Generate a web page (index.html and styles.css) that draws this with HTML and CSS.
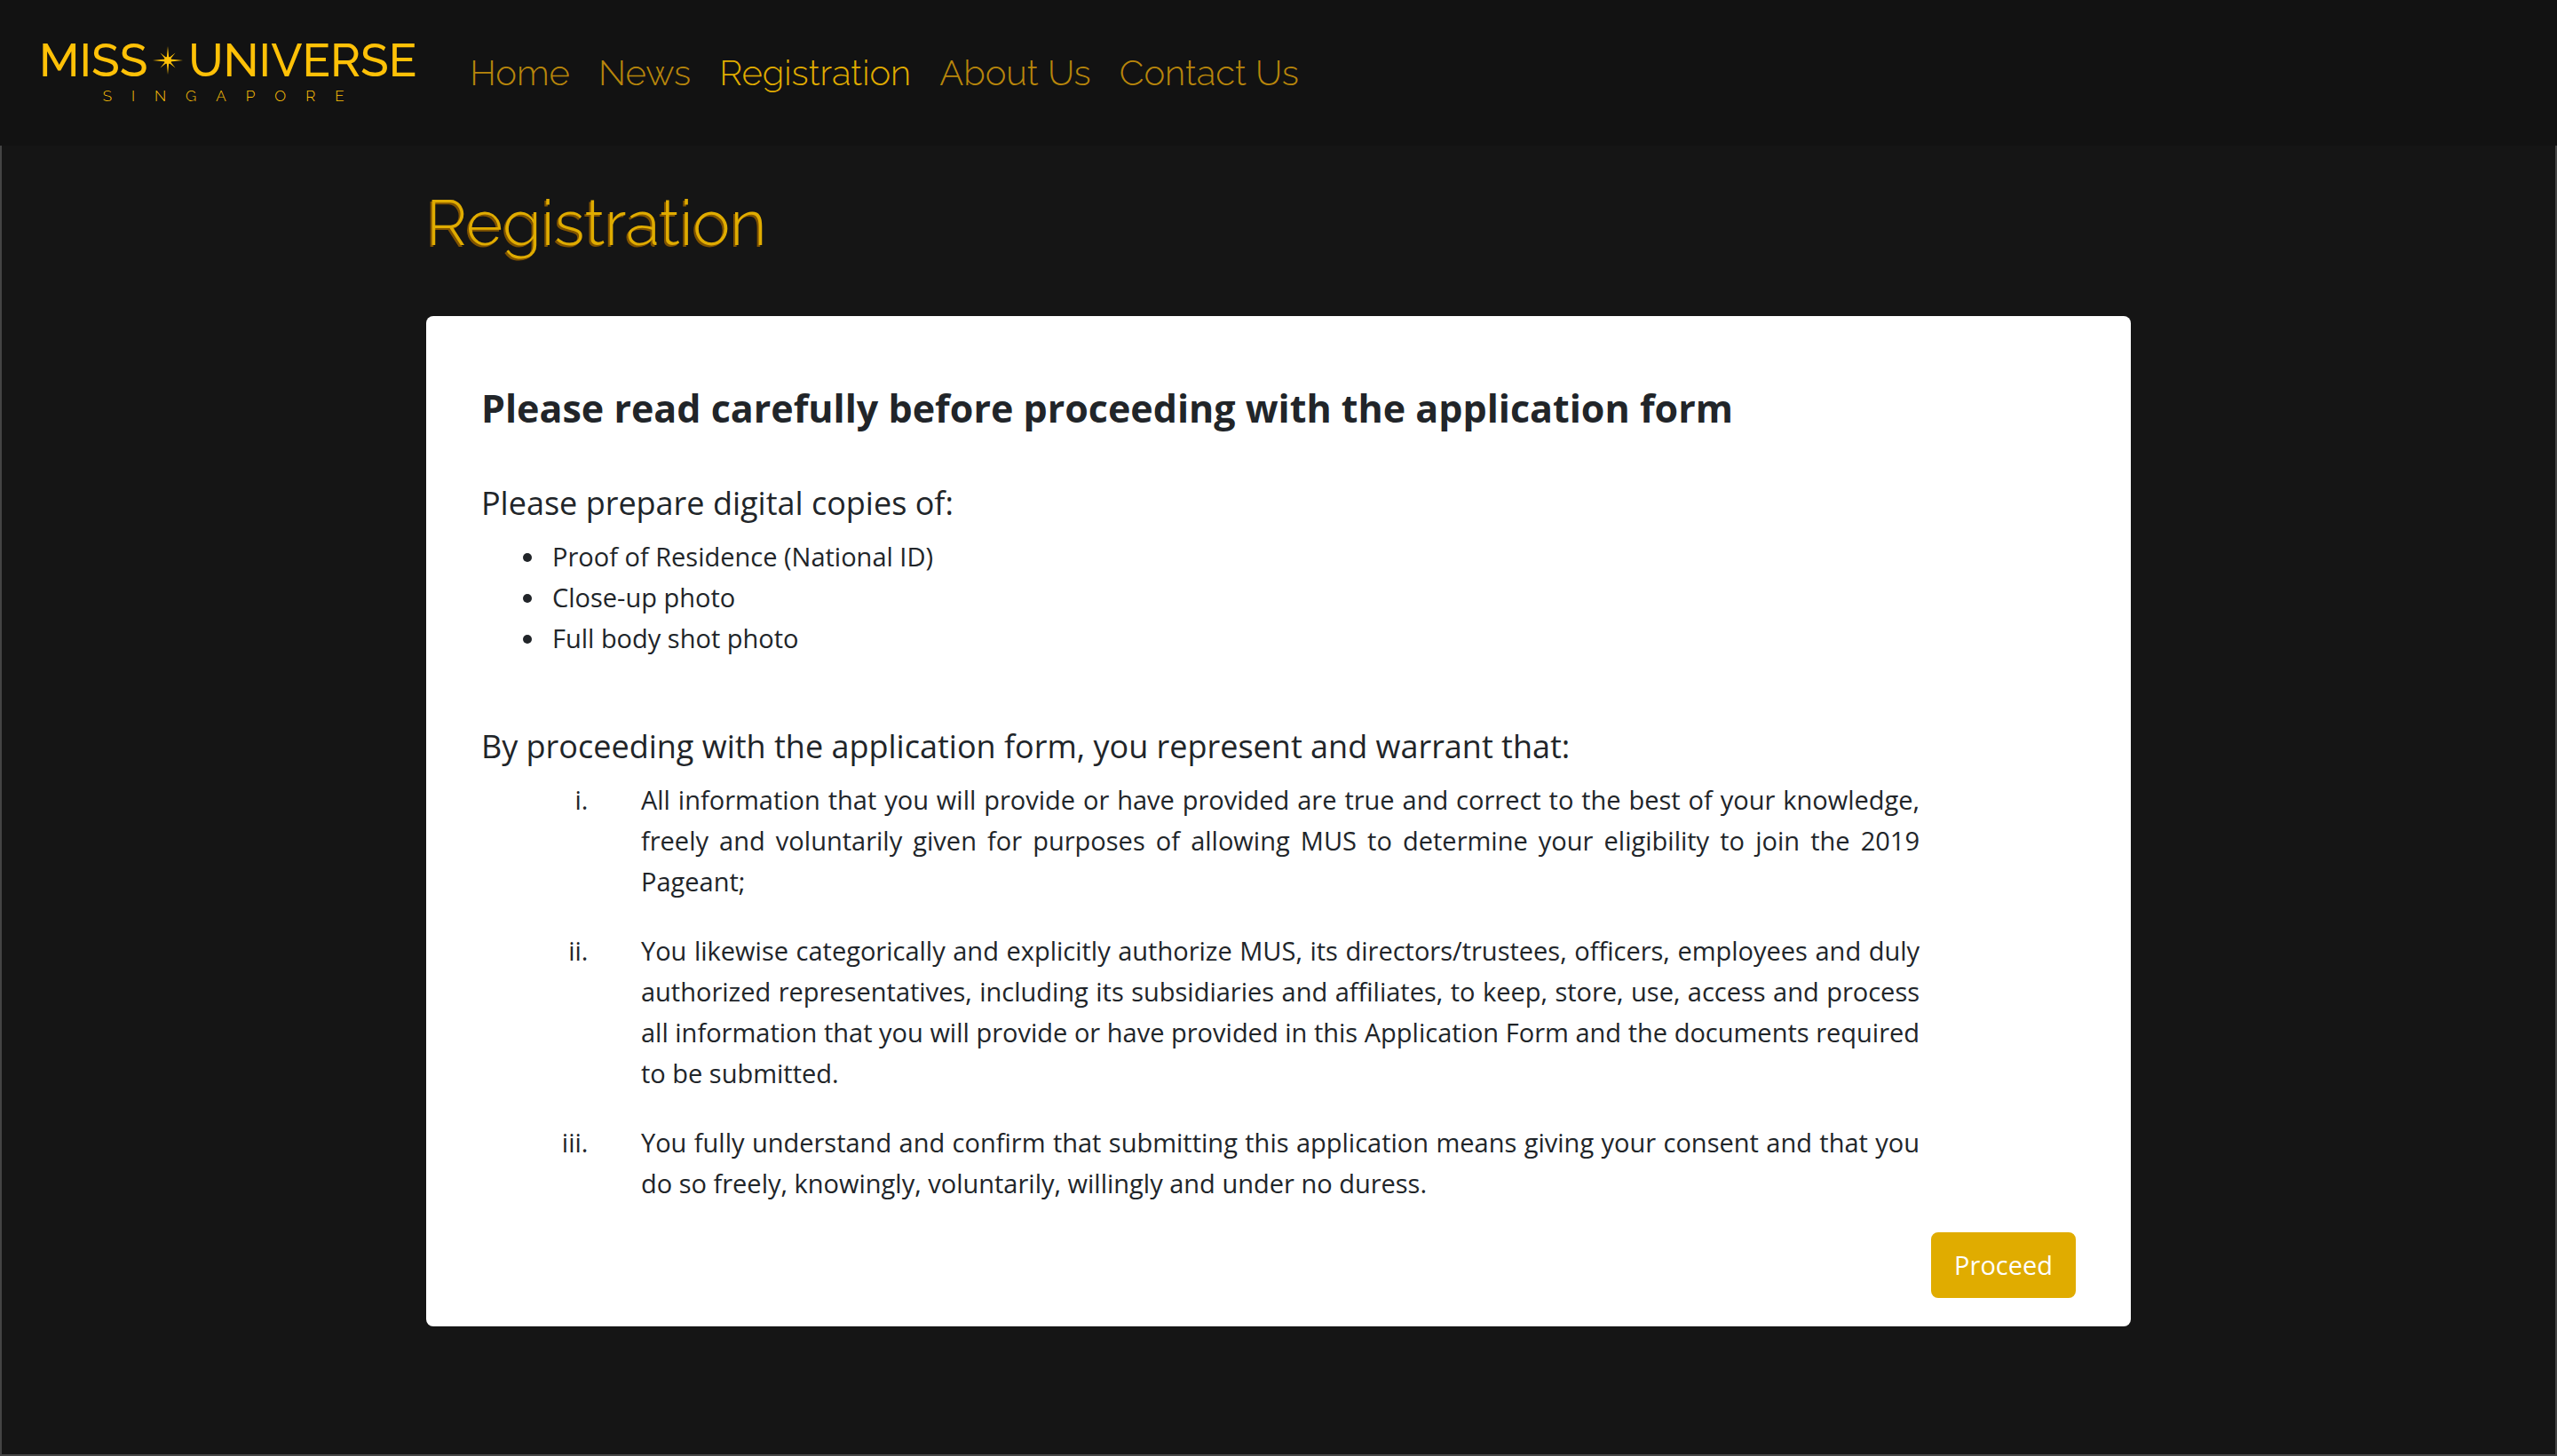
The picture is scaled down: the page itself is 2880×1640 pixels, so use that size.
FILE: index.html
```html
<!DOCTYPE html>
<html lang="en">
<head>
<meta charset="utf-8">
<title>Registration</title>
<meta name="viewport" content="width=device-width, initial-scale=1">
<link rel="stylesheet" href="styles.css">
</head>
<body>
<header class="navbar">
  <a class="brand" href="#">
    <span class="brand-name">
      <span>MISS</span>
      <svg class="brand-star" viewBox="0 0 34 32" aria-hidden="true"><path d="M17 0 L18.500 16 L17 32 L15.500 16 Z M0 16 L17 14.300 L34 16 L17 17.700 Z M8.500 7.500 L18 15 L25.500 24.500 L16 17 Z M25.500 7.500 L18 17 L8.500 24.500 L16 15 Z"/><circle cx="17" cy="16" r="4"/></svg>
      <span>UNIVERSE</span>
    </span>
    <span class="brand-place">SINGAPORE</span>
  </a>
  <nav class="nav">
    <a class="nav-link" href="#">Home</a>
    <a class="nav-link" href="#">News</a>
    <a class="nav-link active" href="#">Registration</a>
    <a class="nav-link" href="#">About Us</a>
    <a class="nav-link" href="#">Contact Us</a>
  </nav>
</header>
<main class="page">
  <div class="container">
    <h1 class="title">Registration</h1>
    <section class="card">
      <h2 class="card-title">Please read carefully before proceeding with the application form</h2>
      <h3 class="subtitle">Please prepare digital copies of:</h3>
      <ul class="documents">
        <li>Proof of Residence (National ID)</li>
        <li>Close-up photo</li>
        <li>Full body shot photo</li>
      </ul>
      <h3 class="subtitle">By proceeding with the application form, you represent and warrant that:</h3>
      <ol class="terms">
        <li>All information that you will provide or have provided are true and correct to the best of your knowledge, freely and voluntarily given for purposes of allowing MUS to determine your eligibility to join the 2019 Pageant;</li>
        <li>You likewise categorically and explicitly authorize MUS, its directors/trustees, officers, employees and duly authorized representatives, including its subsidiaries and affiliates, to keep, store, use, access and process all information that you will provide or have provided in this Application Form and the documents required to be submitted.</li>
        <li>You fully understand and confirm that submitting this application means giving your consent and that you do so freely, knowingly, voluntarily, willingly and under no duress.</li>
      </ol>
      <div class="actions"><button class="btn" type="button">Proceed</button></div>
    </section>
  </div>
</main>
</body>
</html>
```

FILE: styles.css
```css
* { box-sizing: border-box; }

body {
  margin: 0;
  min-height: 100vh;
  display: flex;
  flex-direction: column;
  background: #151515;
  color: #212529;
  font-family: "Open Sans", sans-serif;
  font-size: 29px;
  line-height: 46px;
}

h1, h2, h3, ul, ol { margin: 0; }

.navbar {
  display: flex;
  align-items: center;
  gap: 60px;
  min-height: 164px;
  padding: 0 44px;
  background: #121212;
  font-family: Raleway, Lato, sans-serif;
}

.brand {
  display: flex;
  flex-direction: column;
  align-items: center;
  padding-bottom: 4px;
  color: #ffc107;
  text-decoration: none;
}

.brand-name {
  display: flex;
  align-items: center;
  gap: 6px;
  font-size: 52px;
  font-weight: 500;
  line-height: 56px;
}

.brand-star { width: 34px; height: 32px; fill: #ffc107; }

.brand-place {
  padding-left: 12px;
  font-size: 17px;
  font-weight: 300;
  line-height: 24px;
  letter-spacing: 22px;
}

.nav { display: flex; gap: 32px; }

.nav-link {
  color: #b8860b;
  font-size: 40px;
  font-weight: 300;
  line-height: 64px;
  text-decoration: none;
}

.nav-link.active { color: #e0ac00; }

.page {
  flex: 1;
  padding: 44px 16px;
  border: 2px solid #444;
  border-top: 0;
}

.container { width: 66.67vw; margin: 0 auto; }

.title {
  margin-bottom: 62px;
  color: #e0ac00;
  font-family: Raleway, Lato, sans-serif;
  font-size: 71px;
  font-weight: 300;
  line-height: 86px;
  text-shadow: -2px 2px 0 #805300;
}

.card {
  padding: 78px 62px 32px;
  border-radius: 8px;
  background: #fff;
}

.card-title {
  margin-bottom: 59px;
  font-size: 43px;
  font-weight: 700;
  line-height: 52px;
}

.subtitle {
  margin-bottom: 16px;
  font-size: 36px;
  font-weight: 400;
  line-height: 43px;
}

.documents { margin-bottom: 77px; padding-left: 74px; }

.documents li { padding-left: 6px; }

.terms {
  padding: 0 176px 0 128px;
  list-style: lower-roman;
  text-align: justify;
}

.terms li { margin-bottom: 32px; padding-left: 52px; }

.actions { display: flex; justify-content: flex-end; }

.btn {
  padding: 12px 24px;
  border: 2px solid #e0ac00;
  border-radius: 8px;
  background: #e0ac00;
  color: #fff;
  font: inherit;
}
```
